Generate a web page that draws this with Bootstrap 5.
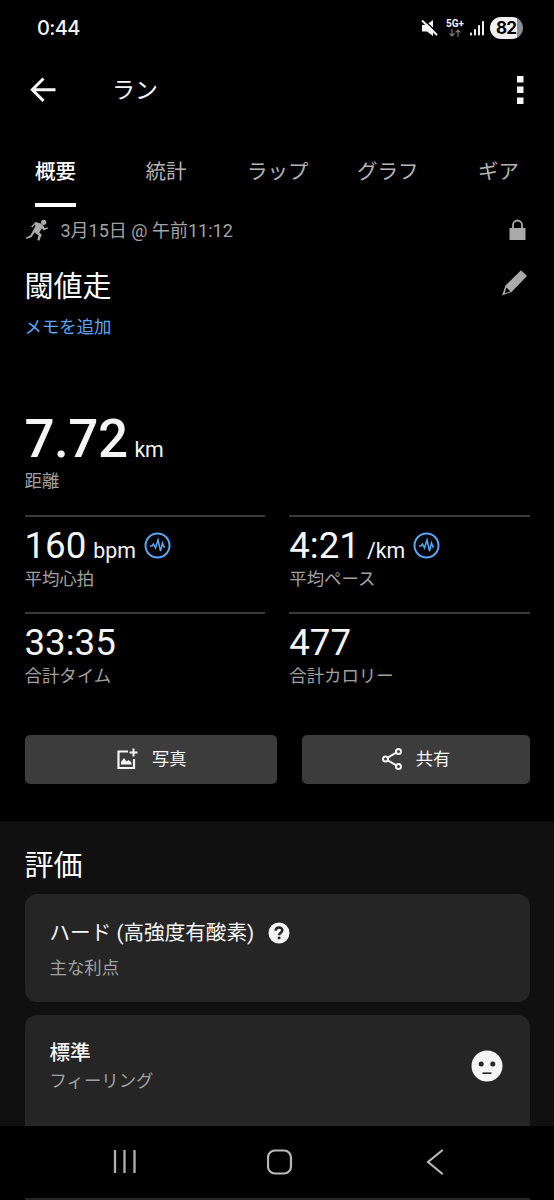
<!DOCTYPE html>
<html lang="ja" data-bs-theme="dark">
<head>
<meta charset="utf-8">
<meta name="viewport" content="width=device-width, initial-scale=1">
<title>ラン</title>
<link href="https://cdn.jsdelivr.net/npm/bootstrap@5.3.0/dist/css/bootstrap.min.css" rel="stylesheet">
<style>
body{background:#000;color:#f5f5f5;font-family:Roboto,"Noto Sans CJK JP",sans-serif;height:1200px;overflow:hidden}
svg{display:block;flex:none}
.status{height:56px;padding:0 31px 0 37px}
.clock{font:500 20px/24px Inter,"Open Sans",sans-serif;letter-spacing:-.6px}
.batt{width:33px;height:22px;border-radius:11px;background:linear-gradient(90deg,#f0f0f0 81%,#8d8d8d 81%);color:#000;font:700 17px/22px Inter,sans-serif;letter-spacing:-.8px;padding-right:1px}
.net{font:700 10px/10px Roboto,sans-serif;margin-left:7px}
.appbar{height:68px;padding:0 30px 0 30px}
.apptitle{font-size:23px;line-height:30px;margin:2px 0 0 55px}
.tabs{height:83px;padding-left:35px;font-size:20.5px}
.tabs .nav-link{padding:33px 0 0;line-height:30px;height:83px;color:#b4b4b4;border-bottom:4px solid transparent}
.tabs .nav-link.active{color:#fff;font-weight:500;border-color:#fff}
.tabs .t2{margin-left:69.5px}.tabs .t3{margin-left:60.5px}.tabs .t4{margin-left:48.5px}.tabs .t5{margin-left:59.5px}
.inset{padding:0 24.5px}
.meta{height:46px;font-size:18px;color:#a3a3a3}
.big{font-size:29px;line-height:40px}
.worktitle{margin:2px 0 0}
.sub{font-size:17.4px;line-height:24px;color:#a0a0a0}
.memo{font-size:17.4px;line-height:24px;color:#5ba7f7;margin-top:8px}
.hero{font-size:53px;line-height:60px;font-weight:500;letter-spacing:-.5px;margin-top:6px}
.hero .unit{letter-spacing:-.3px}
.unit{font-size:21.3px;line-height:1;font-weight:400;margin-left:7px}
.stats{display:grid;grid-template-columns:1fr 1fr;column-gap:24.5px;margin-top:21.5px}
.stat{height:97.5px;border-top:2px solid #3a3a3a;padding-top:8px}
.val{font-size:36.7px;line-height:42px;white-space:nowrap}
.val svg{margin-left:8px}
.act{height:49px;border-radius:5px;background:#3c3c3c;color:#f5f5f5;font-size:17.3px;border:0;padding:0}
.act:hover{background:#464646}
.actions{gap:24.5px;margin-top:25px;margin-bottom:37px}
.actions .act:first-child{width:252.5px}
.actions .act:last-child{width:228px}
.actions span{margin-left:13px;padding-top:1px}
.rating{background:#101010;height:379px;padding-top:25px}
.panel{background:#252525;border-radius:12px;padding:0 25px}
.ptitle{font-size:20.6px;line-height:30px}
.p1{height:108px;margin-top:8.500px;padding-top:23.500px}
.p1 svg{margin-left:14px}
.p1 .sub{margin-top:8px}
.p2{height:183px;margin-top:12.500px;padding-top:23px}
.p2 .sub{margin-top:1px}
.p2 svg{margin:12px 2px 0 0}
.sysnav{height:74px;background:#000;bottom:0;left:0;right:0;z-index:2}
.keys{height:72px;padding:23px 110px 0 112px}
.sysnav .edge{height:2px;background:#252525;margin:0 24.5px}
</style>
</head>
<body>
<div class="status d-flex align-items-center">
  <span class="clock">0:44</span>
  <svg class="ms-auto" width="18" height="18" viewBox="0 0 18 18"><path d="M1 6h4L12 1v16l-6-4.500H1z" fill="#f5f5f5"/><path d="M3 1l14 13.500" stroke="#000" stroke-width="1.500"/><path d="M1 1.500l15 14.500" stroke="#f5f5f5" stroke-width="2"/></svg>
  <div class="d-flex flex-column align-items-center net"><span>5G+</span>
    <svg width="12" height="8" viewBox="0 0 12 8" fill="none" stroke="#777" stroke-width="1.2"><path d="M3 0v7M.5 4.5L3 7l2.500-2.500M9 8V1M6.500 3.500L9 1l2.500 2.500"/></svg></div>
  <svg class="ms-1" width="18" height="17" viewBox="0 0 18 17" fill="#f0f0f0"><rect x="2" y="12.500" width="2" height="3" rx=".8"/><rect x="6" y="9" width="2" height="6.500" rx=".8"/><rect x="10" y="5" width="2" height="10.500" rx=".8"/><rect x="14" y="1" width="2" height="14.500" rx=".8"/></svg>
  <span class="batt text-center ms-1">82</span>
</div>
<header class="appbar d-flex align-items-center">
  <svg width="27" height="26" viewBox="0 0 27 26" fill="none" stroke="#f5f5f5" stroke-width="3"><path d="M25.500 12.700H3M13.500 1.500L2.300 12.700l11.200 11.200"/></svg>
  <span class="apptitle">ラン</span>
  <svg class="ms-auto" width="8" height="30" viewBox="0 0 8 30" fill="#f5f5f5"><path d="M1 1h6.500v6.500H1zM1 11.500h6.500V18H1zM1 22.500h6.500V29H1z"/></svg>
</header>
<nav class="nav tabs flex-nowrap">
  <a class="nav-link active" href="#">概要</a><a class="nav-link t2" href="#">統計</a><a class="nav-link t3" href="#">ラップ</a><a class="nav-link t4" href="#">グラフ</a><a class="nav-link t5" href="#">ギア</a>
</nav>
<main class="inset">
  <div class="meta d-flex align-items-center">
    <svg width="24" height="24" viewBox="0 0 24 24" fill="#aaa"><circle cx="18.700" cy="4.300" r="2.600"/><path d="M10.500 4l5.500 1.500 2.500 2.200 1 2.300 3-.8.4 1.500-4.400 1.500-1.700-1.800-2.500 4 2.500 2.300-2.500 6-2-.7 1.300-4.500-4-3-3 4.500-5.300 2L1 19.500l4.500-2.300L10.500 8 9.700 6.600 7.500 9.500 6 8.700z"/></svg>
    <span class="ms-1 ps-2">3月15日 @ 午前11:12</span>
    <svg class="ms-auto me-1" width="17" height="22" viewBox="0 0 17 22"><rect x=".5" y="9" width="16" height="12" fill="#aaa"/><path d="M4 10V6a4.500 4.500 0 0 1 9 0v4" fill="none" stroke="#aaa" stroke-width="1.800"/></svg>
  </div>
  <div class="d-flex justify-content-between pt-2 mt-1">
    <h1 class="big fw-normal worktitle">閾値走</h1>
    <svg class="mt-1" width="29" height="28" viewBox="0 0 29 28"><path d="M20 1.200l6 5.800-15.500 16L1 26.500 4.500 16.500z" fill="#aaa"/><path d="M5.300 18.500l4 3.800-5.500 1.900z" fill="#000"/></svg>
  </div>
  <div class="memo">メモを追加</div>
  <section class="mt-5 pt-3">
    <div class="hero d-flex align-items-baseline"><span>7.72</span><span class="unit">km</span></div>
    <div class="sub">距離</div>
  </section>
  <section class="stats">
    <div class="stat"><div class="val d-flex align-items-baseline"><span>160</span><span class="unit">bpm</span><svg class="align-self-center" width="27" height="27" viewBox="0 0 27 27" fill="none" stroke="#5ba7f7"><circle cx="13.500" cy="13.500" r="12" stroke-width="2"/><path d="M6 14h2l1.500-2 2 4 2.500-8 2.500 11 2-8 1.500 4 .7-1" stroke-width="1.500"/></svg></div><div class="sub">平均心拍</div></div>
    <div class="stat"><div class="val d-flex align-items-baseline"><span>4:21</span><span class="unit">/km</span><svg class="align-self-center" width="27" height="27" viewBox="0 0 27 27" fill="none" stroke="#5ba7f7"><circle cx="13.500" cy="13.500" r="12" stroke-width="2"/><path d="M6 14h2l1.500-2 2 4 2.500-8 2.500 11 2-8 1.500 4 .7-1" stroke-width="1.500"/></svg></div><div class="sub">平均ペース</div></div>
    <div class="stat"><div class="val">33:35</div><div class="sub">合計タイム</div></div>
    <div class="stat"><div class="val">477</div><div class="sub">合計カロリー</div></div>
  </section>
  <div class="actions d-flex">
    <button class="btn act d-flex align-items-center justify-content-center"><svg width="24" height="24" viewBox="0 0 24 24"><path d="M13 4.500H3.500v16.500H19v-9" fill="none" stroke="#f5f5f5" stroke-width="2.200"/><path d="M18.500 1.500v8M14.500 5.500h8" stroke="#f5f5f5" stroke-width="2"/><path d="M6 17.500v-2.500l3-4 2.500 3.500 2-1.500 3 2.500v2z" fill="#f5f5f5"/></svg><span>写真</span></button>
    <button class="btn act d-flex align-items-center justify-content-center"><svg width="22" height="24" viewBox="0 0 22 24" fill="none" stroke="#f5f5f5" stroke-width="2"><circle cx="4.500" cy="12" r="2.500"/><circle cx="17.500" cy="4.500" r="2.500"/><circle cx="17.500" cy="19.500" r="2.500"/><path d="M6.700 10.700l8.600-5M6.700 13.300l8.600 5"/></svg><span>共有</span></button>
  </div>
</main>
<section class="rating inset">
  <h2 class="big fw-normal mb-0">評価</h2>
  <div class="panel p1"><div class="d-flex align-items-center"><span class="ptitle">ハード (高強度有酸素)</span><svg width="22" height="22" viewBox="0 0 22 22"><circle cx="11" cy="11" r="10.500" fill="#f5f5f5"/><path d="M7.700 8.700c0-4.300 6.600-4.200 6.600-.4 0 2.400-3.200 2.600-3.200 5" fill="none" stroke="#252525" stroke-width="2.500"/><rect x="9.800" y="14.700" width="2.600" height="2.500" fill="#252525"/></svg></div><div class="sub">主な利点</div></div>
  <div class="panel p2 d-flex justify-content-between"><div><div class="ptitle fw-medium">標準</div><div class="sub">フィーリング</div></div><svg width="32" height="32" viewBox="0 0 32 32"><circle cx="16" cy="16" r="15.500" fill="#f5f5f5"/><circle cx="10.200" cy="14" r="2.500" fill="#252525"/><circle cx="21.800" cy="14" r="2.500" fill="#252525"/><path d="M11.500 23.200h9" stroke="#252525" stroke-width="1.600"/></svg></div>
</section>
<div class="sysnav position-absolute">
  <div class="keys d-flex justify-content-between">
    <svg width="26" height="26" viewBox="0 0 26 26" stroke="#b0b0b0" stroke-width="2.300"><path d="M3 1v23M12.500 1v23M22.500 1v23"/></svg>
    <svg class="me-1" width="27" height="26" viewBox="0 0 27 26" fill="none" stroke="#b8b8b8" stroke-width="2.200"><rect x="1" y="1.500" width="23" height="23" rx="7"/></svg>
    <svg width="18" height="26" viewBox="0 0 18 26" fill="none" stroke="#b8b8b8" stroke-width="2.200" stroke-linecap="round"><path d="M16 1.500L2 13l14 11.500"/></svg>
  </div>
  <div class="edge"></div>
</div>
<script src="https://cdn.jsdelivr.net/npm/bootstrap@5.3.0/dist/js/bootstrap.bundle.min.js"></script>
</body>
</html>
